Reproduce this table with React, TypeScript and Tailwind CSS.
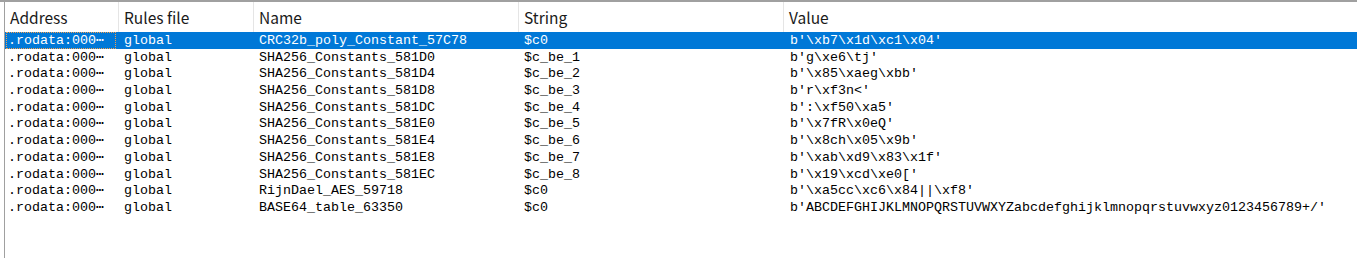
const columns = [
  { title: "Address", width: "w-[114px]" },
  { title: "Rules file", width: "w-[135px]" },
  { title: "Name", width: "w-[265px]" },
  { title: "String", width: "w-[265px]" },
  { title: "Value", width: "flex-1" },
];

const rows = [
  ["global", "CRC32b_poly_Constant_57C78", "$c0", "b'\\xb7\\x1d\\xc1\\x04'"],
  ["global", "SHA256_Constants_581D0", "$c_be_1", "b'g\\xe6\\tj'"],
  ["global", "SHA256_Constants_581D4", "$c_be_2", "b'\\x85\\xaeg\\xbb'"],
  ["global", "SHA256_Constants_581D8", "$c_be_3", "b'r\\xf3n<'"],
  ["global", "SHA256_Constants_581DC", "$c_be_4", "b':\\xf50\\xa5'"],
  ["global", "SHA256_Constants_581E0", "$c_be_5", "b'\\x7fR\\x0eQ'"],
  ["global", "SHA256_Constants_581E4", "$c_be_6", "b'\\x8ch\\x05\\x9b'"],
  ["global", "SHA256_Constants_581E8", "$c_be_7", "b'\\xab\\xd9\\x83\\x1f'"],
  ["global", "SHA256_Constants_581EC", "$c_be_8", "b'\\x19\\xcd\\xe0['"],
  ["global", "RijnDael_AES_59718", "$c0", "b'\\xa5cc\\xc6\\x84||\\xf8'"],
  ["global", "BASE64_table_63350", "$c0", "b'ABCDEFGHIJKLMNOPQRSTUVWXYZabcdefghijklmnopqrstuvwxyz0123456789+/'"],
];

export default function App() {
  return (
    <div className="w-[1357px] h-[258px] bg-white overflow-hidden flex flex-col">
      {/* top edge */}
      <div className="h-[2px] bg-[#a0a0a0] shrink-0"></div>

      <div className="flex-1 ml-[4px] border-l border-[#a0a0a0] flex flex-col">
        {/* Header */}
        <div className="flex h-[30px] shrink-0 font-['Noto_Sans_CJK_SC','Noto_Sans',sans-serif] text-[15.5px] text-[#1a1a1a]">
          {columns.map((c, i) => (
            <div
              key={c.title}
              className={`${c.width} flex items-center pl-[5px] pt-[2px] ${
                i < columns.length - 1 ? "border-r border-[#e5e5e5]" : ""
              }`}
            >
              {c.title}
            </div>
          ))}
        </div>

        {/* Rows */}
        <div className="font-['Liberation_Mono',monospace] text-[13.33px] leading-[17px]">
          {rows.map((r, idx) => {
            const selected = idx === 0;
            return (
              <div
                key={idx}
                className={`flex h-[16.7px] whitespace-nowrap ${
                  selected ? "bg-[#0078d7] text-white" : "text-black"
                }`}
              >
                <div className="w-[115px] pl-[1px]">
                  <span
                    className={`block w-[110px] h-[16.7px] pl-[2px] ${
                      selected ? "outline outline-1 outline-dotted outline-offset-[-1px] outline-[#f0a050]" : ""
                    }`}
                  >
                    .rodata:000⋯
                  </span>
                </div>
                <div className="w-[135px] pl-[4px]">{r[0]}</div>
                <div className="w-[265px] pl-[4px]">{r[1]}</div>
                <div className="w-[265px] pl-[4px]">{r[2]}</div>
                <div className="flex-1 pl-[5px]">{r[3]}</div>
              </div>
            );
          })}
        </div>
      </div>
    </div>
  );
}
